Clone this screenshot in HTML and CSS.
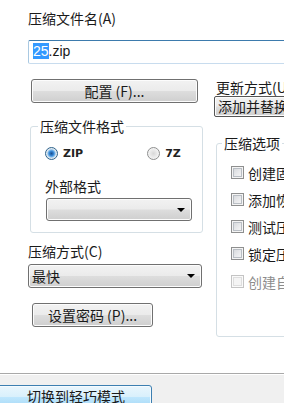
FILE: index.html
```html
<!DOCTYPE html>
<html>
<head>
<meta charset="utf-8">
<link rel="stylesheet" href="styles.css">
</head>
<body>
<div class="main">
  <div class="label top-label">压缩文件名(A)</div>
  <div class="field"><span class="sel">25</span>.zip</div>
  <div class="cols">
    <div class="col-left">
      <div class="btn btn-config">配置 (F)...</div>
      <div class="group group-format">
        <span class="legend">压缩文件格式</span>
        <div class="radios">
          <div class="radio-item"><span class="radio checked"></span><span class="rlabel">ZIP</span></div>
          <div class="radio-item radio-7z"><span class="radio"></span><span class="rlabel">7Z</span></div>
        </div>
        <div class="label ext-label">外部格式</div>
        <div class="combo combo-ext"><span class="arrow"></span></div>
      </div>
      <div class="label method-label">压缩方式(C)</div>
      <div class="combo combo-method"><span class="ctext">最快</span><span class="arrow"></span></div>
      <div class="btn btn-pass">设置密码 (P)...</div>
    </div>
    <div class="col-right">
      <div class="label update-label">更新方式(U)</div>
      <div class="combo combo-update"><span class="ctext">添加并替换文件</span></div>
      <div class="group group-opts">
        <span class="legend">压缩选项</span>
        <div class="checks">
          <div class="check-item"><span class="check"></span><span>创建固实压缩文件</span></div>
          <div class="check-item"><span class="check"></span><span>添加恢复记录</span></div>
          <div class="check-item"><span class="check"></span><span>测试压缩文件</span></div>
          <div class="check-item"><span class="check"></span><span>锁定压缩文件</span></div>
          <div class="check-item disabled"><span class="check"></span><span>创建自解压格式</span></div>
        </div>
      </div>
    </div>
  </div>
</div>
<div class="footer">
  <div class="mode-btn">切换到轻巧模式</div>
</div>
</body>
</html>
```
FILE: styles.css
```css
html, body {
  margin: 0;
  padding: 0;
}
body {
  width: 284px;
  height: 403px;
  overflow: hidden;
  background: #ffffff;
  font-family: "Noto Sans CJK SC", "Microsoft YaHei", sans-serif;
  font-size: 14px;
  color: #1a1a1a;
}
.main {
  height: 373px;
  box-sizing: border-box;
  padding: 9px 0 0 28px;
  width: 400px;
}
.label {
  line-height: 18px;
  height: 18px;
  white-space: nowrap;
}
.field {
  margin-top: 13px;
  height: 24px;
  width: 320px;
  box-sizing: border-box;
  border: 1px solid #a9c9e2;
  border-top-color: #3d7bad;
  border-bottom-color: #c8dcee;
  border-radius: 2px;
  padding-left: 4px;
  line-height: 21px;
  font-family: "Liberation Sans", "Noto Sans CJK SC", sans-serif;
  font-size: 14px;
}
.sel {
  background: #3399ff;
  color: #fff;
}
.cols {
  margin-top: 15px;
  display: grid;
  grid-template-columns: 174px 120px;
  column-gap: 12px;
}
.col-left, .col-right {
  display: flex;
  flex-direction: column;
  align-items: flex-start;
}
.btn {
  height: 24px;
  box-sizing: border-box;
  border: 1px solid #707070;
  border-radius: 3px;
  background: linear-gradient(#f2f2f2 0%, #ebebeb 48%, #dddddd 52%, #cfcfcf 100%);
  box-shadow: inset 0 0 0 1px #fcfcfc;
  text-align: center;
  line-height: 22px;
  white-space: nowrap;
}
.btn-config {
  margin-left: 3px;
  width: 167px;
}
.group {
  position: relative;
  box-sizing: border-box;
  border: 1px solid #d5dfe5;
  border-radius: 3px;
}
.legend {
  position: absolute;
  top: -10px;
  background: #fff;
  padding: 0 2px;
  line-height: 18px;
  white-space: nowrap;
}
.group-format {
  margin-top: 23px;
  margin-left: 2px;
  width: 173px;
  height: 107px;
  padding: 17px 0 0 14px;
}
.group-format .legend {
  left: 7px;
}
.radios {
  display: flex;
  height: 18px;
  align-items: center;
}
.radio-item {
  display: flex;
  align-items: center;
  gap: 5px;
  font-family: "DejaVu Sans", "Liberation Sans", sans-serif;
  font-size: 11px;
  font-weight: bold;
  color: #222;
}
.radio-7z {
  margin-left: 64px;
}
.radio {
  width: 13px;
  height: 13px;
  box-sizing: border-box;
  border-radius: 50%;
  border: 1px solid #8e8f8f;
  background: radial-gradient(circle at 50% 50%, #d8d8d8 0, #e8e8e8 3px, #f6f6f6 6px);
}
.radio.checked {
  border-color: #2c628b;
  background: radial-gradient(circle at 50% 50%, #1d4f8c 0, #2f7fcf 2px, #7ab8ea 3.5px, #d6e3ee 4.5px, #f4f4f4 6px);
}
.ext-label {
  margin-top: 15px;
}
.combo {
  position: relative;
  box-sizing: border-box;
  border: 1px solid #707070;
  border-radius: 3px;
  background: linear-gradient(#f2f2f2 0%, #ebebeb 48%, #dddddd 52%, #cfcfcf 100%);
  box-shadow: inset 0 0 0 1px #fcfcfc;
  white-space: nowrap;
  overflow: hidden;
}
.arrow {
  position: absolute;
  right: 6px;
  top: 50%;
  margin-top: -2px;
  width: 0;
  height: 0;
  border-left: 4px solid transparent;
  border-right: 4px solid transparent;
  border-top: 4px solid #000;
}
.combo-ext {
  margin-top: 3px;
  margin-left: 1px;
  width: 146px;
  height: 23px;
}
.method-label {
  margin-top: 9px;
}
.combo-method {
  margin-top: 4px;
  width: 174px;
  height: 24px;
}
.ctext {
  display: block;
  padding-left: 3px;
  line-height: 22px;
}
.btn-pass {
  margin-top: 15px;
  margin-left: 4px;
  width: 121px;
}
.update-label {
  margin-top: -1px;
  margin-left: 2px;
}
.combo-update {
  margin-top: 0;
  width: 110px;
  height: 21px;
  border-color: #555;
  border-radius: 2px;
}
.combo-update .ctext {
  line-height: 19px;
  padding-left: 3px;
}
.group-opts {
  margin-top: 26px;
  margin-left: 2px;
  width: 120px;
  height: 194px;
  padding: 19px 0 0 14px;
}
.group-opts .legend {
  left: 5px;
}
.checks {
  display: flex;
  flex-direction: column;
  gap: 8px;
}
.check-item {
  display: flex;
  align-items: center;
  gap: 4px;
  height: 19px;
  white-space: nowrap;
}
.check {
  flex: none;
  width: 13px;
  height: 13px;
  box-sizing: border-box;
  border: 1px solid #8e8f8f;
  background: linear-gradient(135deg, #cfd2d6 0%, #e9eaec 55%, #f9f9f9 100%);
  box-shadow: inset 0 0 0 1px #f4f4f4, inset 0 0 0 2px #b9bec4;
}
.check-item.disabled {
  color: #8d8d8d;
  margin-top: 1px;
}
.check-item.disabled .check {
  border-color: #c4c4c4;
  background: #f4f4f4;
  box-shadow: inset 0 0 0 1px #fafafa, inset 0 0 0 2px #dedede;
}
.footer {
  height: 30px;
  box-sizing: border-box;
  border-top: 1px solid #a9a9a9;
  background: #f0f0f0;
  padding-top: 11px;
  box-shadow: inset 0 1px 0 #ffffff;
}
.mode-btn {
  margin-left: -6px;
  width: 158px;
  height: 24px;
  box-sizing: border-box;
  border: 1px solid #3c7fb1;
  border-radius: 3px;
  background: linear-gradient(#eaf6fd 0%, #d9f0fc 48%, #bee6fd 52%, #a7d9f5 100%);
  box-shadow: inset 0 0 0 1px #f4fbff;
  text-align: center;
  padding-left: 6px;
  line-height: 20px;
  font-size: 14px;
  white-space: nowrap;
}
```
